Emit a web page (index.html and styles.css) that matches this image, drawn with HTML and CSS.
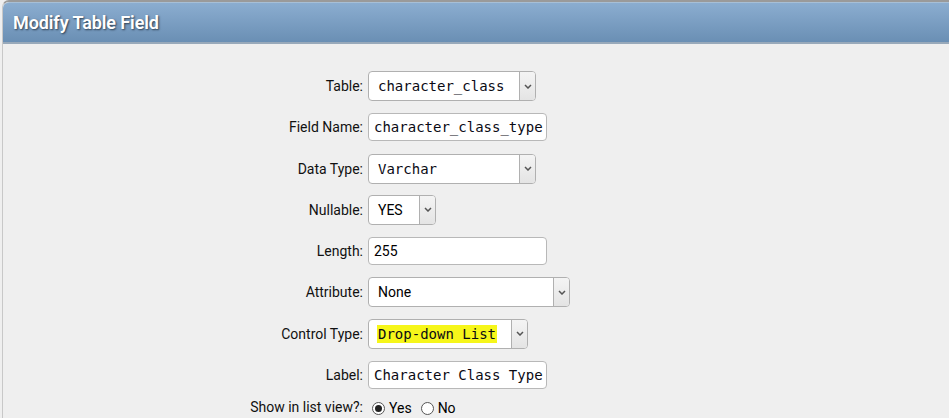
FILE: index.html
```html
<!DOCTYPE html>
<html>
<head>
<meta charset="utf-8">
<link rel="stylesheet" href="styles.css">
</head>
<body>
<div class="panel">
  <div class="panel-header"><h1 class="title">Modify Table Field</h1></div>
  <form class="form">
    <label class="lbl">Table:</label>
    <div class="field"><div class="select w-table"><span class="val mono">character_class</span><span class="arrow"><svg width="8" height="5" viewBox="0 0 8 5"><path d="M1 1 L4 4 L7 1" fill="none" stroke="#555" stroke-width="1.5"/></svg></span></div></div>

    <label class="lbl">Field Name:</label>
    <div class="field"><div class="input"><span class="val mono">character_class_type</span></div></div>

    <label class="lbl">Data Type:</label>
    <div class="field"><div class="select w-table"><span class="val mono">Varchar</span><span class="arrow"><svg width="8" height="5" viewBox="0 0 8 5"><path d="M1 1 L4 4 L7 1" fill="none" stroke="#555" stroke-width="1.5"/></svg></span></div></div>

    <label class="lbl">Nullable:</label>
    <div class="field"><div class="select w-null"><span class="val sans">YES</span><span class="arrow"><svg width="8" height="5" viewBox="0 0 8 5"><path d="M1 1 L4 4 L7 1" fill="none" stroke="#555" stroke-width="1.5"/></svg></span></div></div>

    <label class="lbl">Length:</label>
    <div class="field"><div class="input"><span class="val sans">255</span></div></div>

    <label class="lbl">Attribute:</label>
    <div class="field"><div class="select w-attr"><span class="val sans">None</span><span class="arrow"><svg width="8" height="5" viewBox="0 0 8 5"><path d="M1 1 L4 4 L7 1" fill="none" stroke="#555" stroke-width="1.5"/></svg></span></div></div>

    <label class="lbl">Control Type:</label>
    <div class="field"><div class="select w-ctrl"><span class="val mono"><span class="hl">Drop-down List</span></span><span class="arrow"><svg width="8" height="5" viewBox="0 0 8 5"><path d="M1 1 L4 4 L7 1" fill="none" stroke="#555" stroke-width="1.5"/></svg></span></div></div>

    <label class="lbl">Label:</label>
    <div class="field"><div class="input"><span class="val mono">Character Class Type</span></div></div>

    <label class="lbl lbl-radio">Show in list view?:</label>
    <div class="field radios">
      <span class="radio checked"></span><span class="rtext">Yes</span>
      <span class="radio"></span><span class="rtext">No</span>
    </div>
  </form>
</div>
</body>
</html>
```
FILE: styles.css
```css
html, body {
  margin: 0;
  padding: 0;
  background: #efefef;
  font-family: Roboto, "Noto Sans", sans-serif;
  overflow: hidden;
}
.panel {
  box-sizing: border-box;
  margin-left: 2px;
  height: 418px;
  overflow: hidden;
  border-top: 2px solid #9a9a9a;
  border-left: 1px solid #c8c8c8;
  border-top-left-radius: 7px;
  background: #efefef;
}
.panel-header {
  height: 39px;
  border-top-left-radius: 6px;
  border-top: 1px solid #a7bfd6;
  border-bottom: 2px solid #98a9ba;
  background: linear-gradient(#8badd0, #6a8fb4);
  display: flex;
  align-items: center;
  padding-left: 10px;
}
.title {
  margin: 0;
  color: #fff;
  font-size: 18px;
  font-weight: 600;
  text-shadow: 1px 1px 2px #2c3e50;
  letter-spacing: -0.1px;
}
.form {
  display: grid;
  grid-template-columns: 360px auto;
  grid-template-rows: repeat(8, 30px) 20px;
  column-gap: 5px;
  row-gap: 11.3px;
  padding-top: 27px;
}
.lbl {
  justify-self: end;
  align-self: center;
  font-size: 14px;
  color: #111;
}
.field {
  display: flex;
  align-items: center;
}
.select {
  box-sizing: border-box;
  height: 30px;
  border: 1px solid #b0b0b0;
  border-radius: 4px;
  background: #fff;
  display: flex;
  align-items: stretch;
  overflow: hidden;
}
.select .val {
  flex: 1;
  display: flex;
  align-items: center;
  padding-left: 9px;
}
.arrow {
  width: 15px;
  border-left: 1px solid #b0b0b0;
  background: linear-gradient(#f4f4f4, #e4e4e4);
  display: flex;
  align-items: center;
  justify-content: center;
}
.w-table { width: 168px; }
.w-null { width: 68px; }
.w-attr { width: 202px; }
.w-ctrl { width: 160px; }
.input {
  box-sizing: border-box;
  width: 179px;
  height: 28px;
  border: 1px solid #b8b8b8;
  border-radius: 4px;
  background: #fff;
  display: flex;
  align-items: center;
  padding-left: 5px;
  overflow: hidden;
  white-space: nowrap;
}
.mono {
  font-family: "DejaVu Sans Mono", monospace;
  font-size: 14px;
  color: #0a0a14;
  white-space: pre;
}
.sans {
  font-family: Roboto, "Noto Sans", sans-serif;
  font-size: 14px;
  font-weight: 400;
  color: #000;
}
.hl {
  background: #f6f61a;
  padding: 1px 1px;
  margin-left: -1px;
}
.form > .lbl-radio {
  align-self: start;
  margin-top: -2px;
}
.radios {
  align-items: flex-start;
  font-size: 14px;
  color: #000;
  margin-top: -2px;
}
.radio {
  box-sizing: border-box;
  width: 13px;
  height: 13px;
  border-radius: 50%;
  border: 1px solid #555;
  background: #fff;
  margin: 3px 4px 0 4px;
  position: relative;
}
.radio.checked::after {
  content: "";
  position: absolute;
  left: 2px;
  top: 2px;
  width: 7px;
  height: 7px;
  border-radius: 50%;
  background: #222;
}
.rtext {
  margin-right: 5px;
  line-height: 19px;
}
```
